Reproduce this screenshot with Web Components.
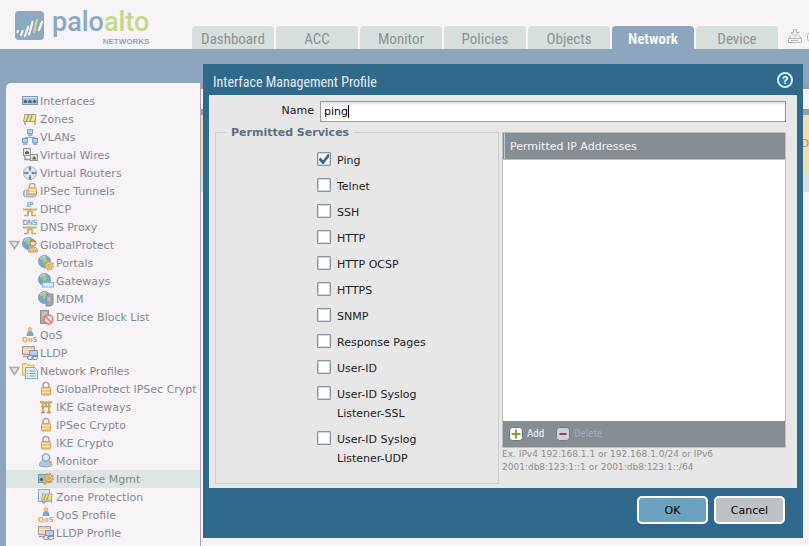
<!DOCTYPE html>
<html lang="en">
<head>
<meta charset="utf-8">
<title>Interface Management Profile</title>
<style>
html, body { height: 100%; }
body { margin: 0; overflow: hidden; background: #8ca6bd; font: 11px/18px "DejaVu Sans", sans-serif; --narrow: "Roboto Condensed", "DejaVu Sans Condensed", sans-serif; }
</style>
</head>
<body>
<app-shell>
  <app-header slot="header">
    <app-tab>Dashboard</app-tab>
    <app-tab>ACC</app-tab>
    <app-tab>Monitor</app-tab>
    <app-tab>Policies</app-tab>
    <app-tab>Objects</app-tab>
    <app-tab active>Network</app-tab>
    <app-tab>Device</app-tab>
  </app-header>
  <nav-tree slot="nav">
    <nav-item icon="ports">Interfaces</nav-item>
    <nav-item icon="zone">Zones</nav-item>
    <nav-item icon="vlan">VLANs</nav-item>
    <nav-item icon="wires">Virtual Wires</nav-item>
    <nav-item icon="router">Virtual Routers</nav-item>
    <nav-item icon="tunnel">IPSec Tunnels</nav-item>
    <nav-item icon="dhcp">DHCP</nav-item>
    <nav-item icon="dns">DNS Proxy</nav-item>
    <nav-item icon="globeuser" open>GlobalProtect</nav-item>
    <nav-item icon="portal" child>Portals</nav-item>
    <nav-item icon="gateway" child>Gateways</nav-item>
    <nav-item icon="mdm" child>MDM</nav-item>
    <nav-item icon="block" child>Device Block List</nav-item>
    <nav-item icon="qos">QoS</nav-item>
    <nav-item icon="lldp">LLDP</nav-item>
    <nav-item icon="profiles" open>Network Profiles</nav-item>
    <nav-item icon="lock" child>GlobalProtect IPSec Crypt</nav-item>
    <nav-item icon="torii" child>IKE Gateways</nav-item>
    <nav-item icon="lock" child>IPSec Crypto</nav-item>
    <nav-item icon="lock" child>IKE Crypto</nav-item>
    <nav-item icon="monitor" child>Monitor</nav-item>
    <nav-item icon="mgmt" child selected>Interface Mgmt</nav-item>
    <nav-item icon="zoneprot" child>Zone Protection</nav-item>
    <nav-item icon="qos" child>QoS Profile</nav-item>
    <nav-item icon="lldp" child>LLDP Profile</nav-item>
  </nav-tree>
  <profile-list slot="main"></profile-list>
  <modal-dialog slot="dialog" heading="Interface Management Profile">
    <profile-form>
      <service-check slot="services" checked>Ping</service-check>
      <service-check slot="services">Telnet</service-check>
      <service-check slot="services">SSH</service-check>
      <service-check slot="services">HTTP</service-check>
      <service-check slot="services">HTTP OCSP</service-check>
      <service-check slot="services">HTTPS</service-check>
      <service-check slot="services">SNMP</service-check>
      <service-check slot="services">Response Pages</service-check>
      <service-check slot="services">User-ID</service-check>
      <service-check slot="services">User-ID Syslog Listener-SSL</service-check>
      <service-check slot="services">User-ID Syslog Listener-UDP</service-check>
      <address-grid slot="addresses"></address-grid>
    </profile-form>
    <dialog-button slot="actions" primary>OK</dialog-button>
    <dialog-button slot="actions">Cancel</dialog-button>
  </modal-dialog>
</app-shell>

<script>
const globe = '<circle cx="6.5" cy="6.5" r="6" fill="#3f86c4" stroke="#5677a0"/><path d="M3 2.5L7 1l2 1-1 2 1.5 1L7 8 5 7.5 4.5 5 2 4.5zM7 9l3-1 1 1-2 3-2 .5z" fill="#7fc04b"/><path d="M2 4q2-3 5-3" stroke="#c8e4f6" fill="none" opacity=".7"/>';
const padlock = '<path d="M5 7V4.5a3 3 0 0 1 6 0V7" fill="none" stroke="#8f8a80" stroke-width="1.6"/><rect x="3.5" y="6.5" width="9" height="7.5" rx="1" fill="#f3b13d" stroke="#b57f2c"/><path d="M4 8.5h8M4 11.5h8" stroke="#fbe3a4" stroke-width="1.2"/>';
const barrier = '<path d="M3 3v11M13 3v11" stroke="#857f70" stroke-width="1.5"/><path d="M3 3.5h11l-1 7H1.5z" fill="#f9dc3c" stroke="#87836f"/><path d="M6.5 4L4.5 10M10 4L8 10" stroke="#75725f" stroke-width="1.3"/>';
const relay = '<path d="M1 8.5h14" stroke="#c69423" stroke-width="2"/><path d="M8 9v2M2 14.5h4v-4h4v4h4" fill="none" stroke="#c08a1e" stroke-width="1.7"/>';
const gear = '<circle r="4.4" fill="none" stroke="#c98b22" stroke-width="1.6" stroke-dasharray="1.8 1.6"/><circle r="3.5" fill="#f6bd3e" stroke="#c08722"/><circle r="1.2" fill="#fff0c0" stroke="#a87520"/>';
const pc = (x, y) => `<g transform="translate(${x} ${y})"><rect x=".5" y=".5" width="5" height="4" fill="#7cc8ff" stroke="#4b82bd"/><path d="M1 6h4.5" stroke="#5f6fb0" stroke-width="1.4"/></g>`;
const ICONS = {
  ports: '<rect x=".5" y="3.5" width="15" height="8" fill="#7fb4dc" stroke="#4d7596"/><path d="M2 9.5V8h1V7h1v1h1v1.5zM6.5 9.5V8h1V7h1v1h1v1.5zM11 9.5V8h1V7h1v1h1v1.5z" fill="#111a26" stroke="#111a26" stroke-width=".5"/><path d="M1 4.5h14" stroke="#cfe4f4"/>',
  zone: barrier,
  vlan: '<path d="M8 6v3M3 11V8.5h10V11" fill="none" stroke="#6c87ab"/>' + pc(5, 0) + pc(0, 9) + pc(10, 9),
  wires: '<rect x="1.5" y="1.5" width="7" height="7" fill="#d9d9d2" stroke="#6b6b68"/><rect x="8.5" y="7.5" width="7" height="6" fill="#d9d9d2" stroke="#6b6b68"/><path d="M3 7V5h1V4h2v1h1v2zM10.5 12.5V10.5h1v-1h1.5v1h1v2z" fill="#222"/><path d="M3 9v3.5h5" fill="none" stroke="#6b6b68" stroke-width="1.5"/>',
  router: '<circle cx="8" cy="8" r="6.5" fill="#d5e3ee" stroke="#7e93a8"/><path d="M8 2v4M8 10v4M2 8h4M10 8h4" stroke="#33465c" stroke-width="1.3"/><path d="M6.5 4h3L8 1.5zM6.5 12h3L8 14.5zM4.5 6.5v3L7 8zM11.5 6.5v3L9 8z" fill="#33465c"/>',
  tunnel: '<rect x="1.5" y="7" width="13" height="7" rx="3" fill="#a9c3e4" stroke="#6d8db8"/><ellipse cx="3.5" cy="10.5" rx="1.5" ry="3" fill="#e7effa" stroke="#6d8db8"/><g transform="translate(3 -1) scale(.9)">' + padlock + '</g>',
  dhcp: '<text x="8" y="5.5" text-anchor="middle" font-family="DejaVu Sans" font-size="7" fill="#2f6fa5" stroke="#2f6fa5" stroke-width=".2">IP</text>' + relay,
  dns: '<text x="8" y="5.5" text-anchor="middle" font-family="DejaVu Sans" font-size="7" fill="#2f6fa5" stroke="#2f6fa5" stroke-width=".2">DNS</text>' + relay,
  globeuser: globe + '<circle cx="11" cy="6" r="3" fill="#f6cfa5" stroke="#94602f"/><path d="M8 5.5q.5-3 3-3t3 3q-3-1.5-6 0z" fill="#955c2d"/><path d="M6.5 15q0-5 4.5-5t4.5 5z" fill="#f8a350" stroke="#c46f23"/>',
  portal: globe + '<g transform="translate(11 10.5)">' + gear + '</g>',
  gateway: globe + '<rect x="4.5" y="9.5" width="11" height="4.5" fill="#c5e4f8" stroke="#4c9fd8"/><path d="M6 12h7" stroke="#fff"/>',
  mdm: globe + '<path d="M8 5l2-2h5v10l-2 2H8z" fill="#7f858d" stroke="#5c6066"/><path d="M9.5 7h3M9.5 9h3" stroke="#c7ccd2"/>',
  block: '<rect x="2.5" y="1.5" width="8" height="13" fill="#8d9198" stroke="#64686f"/><path d="M4 4h5M4 6h5" stroke="#c7ccd2"/><circle cx="10.5" cy="10.5" r="4.3" fill="#fbe4e2" stroke="#e0483f" stroke-width="1.7"/><path d="M7.5 7.5l6 6" stroke="#e0483f" stroke-width="1.7"/>',
  qos: '<circle cx="8" cy="2.5" r="2" fill="#f6b23c" stroke="#b97a20" stroke-width=".5"/><path d="M4.5 9q0-5 3.5-5t3.5 5z" fill="#3f8bd0"/><text x="8" y="15" text-anchor="middle" font-family="DejaVu Sans" font-weight="bold" font-size="7" fill="#e48434">QoS</text>',
  lldp: '<rect x=".5" y="1.5" width="12" height="8" fill="#edb97a" stroke="#8b7f76"/><path d="M1 4.5h11M1 7h11" stroke="#fbe7c9"/><path d="M7.5 5.5h8v6h-8z" fill="#8dc0f0" stroke="#4e6f95"/><path d="M1 11.5h6" stroke="#778" stroke-width="1.5"/><rect x="5.5" y="10.5" width="5.5" height="4" rx="2" fill="#ddd" stroke="#555"/><rect x="10" y="10.5" width="5.5" height="4" rx="2" fill="none" stroke="#555"/>',
  profiles: '<path d="M.5 12.5v-12h4l1.5 1.5h6v10.5z" fill="#f5dd8c" stroke="#b3a04c"/><path d="M3.5 15.5v-11h9l3 3v8z" fill="#dceefb" stroke="#4595c5"/><path d="M7.5 8h6M7.5 10.5h6M7.5 13h6M5 8h1M5 10.5h1M5 13h1" stroke="#3f7cab"/>',
  lock: padlock,
  torii: '<path d="M2 3q6 1.5 12 0" fill="none" stroke="#c48a1c" stroke-width="2.4"/><path d="M3 7.5h10M5 4v10M11 4v10M8 4v3" stroke="#c48a1c" stroke-width="1.9"/><path d="M3 13.5h4M9 13.5h4" stroke="#8f6418" stroke-width="1.5"/>',
  monitor: '<path d="M1.5 13q0-6 5-6l7 2v4q-6 2-12 0z" fill="#93b4e0" stroke="#6a8bbb"/><circle cx="8" cy="4.5" r="3.7" fill="#cfe6f6" stroke="#5e7fa6" stroke-width="1.3"/><path d="M10.5 8l4 4.5" stroke="#e0953f" stroke-width="2"/>',
  mgmt: '<rect x=".5" y="3.5" width="12" height="8" fill="#7fb4dc" stroke="#4d7596"/><path d="M2 9.5V8h1V7h1v1h1v1.5z" fill="#111a26" stroke="#111a26" stroke-width=".5"/><path d="M6 13.5l5-5" stroke="#d09426" stroke-width="2.5"/><g transform="translate(11 7)">' + gear + '</g>',
  zoneprot: '<rect x=".5" y=".5" width="11" height="12" fill="#c9e2f8" stroke="#5f93c6"/><g transform="translate(2 2) scale(.87)">' + barrier + '</g><path d="M3 12h6l-3 3z" fill="#5f93c6"/>'
};

const define = (name, css, html, setup) => {
  const template = document.createElement('template');
  template.innerHTML = `<style>*{box-sizing:border-box}${css}</style>${html}`;
  customElements.define(name, class extends HTMLElement {
    connectedCallback() {
      if (this.shadowRoot) return;
      const root = this.attachShadow({ mode: 'open' });
      root.append(template.content.cloneNode(true));
      if (setup) setup(this, root);
    }
  });
};

define('app-shell', `
  :host { display: flex; flex-direction: column; height: 100%; position: relative; overflow: hidden; }
  .work { flex: 1; min-height: 0; display: grid; grid-template-columns: 195px minmax(0, 1fr); padding: 34px 0 0 6px; }
  ::slotted([slot=dialog]) { position: absolute; top: 64px; left: 203px; right: 6px; }
`, `<slot name="header"></slot><div class="work"><slot name="nav"></slot><slot name="main"></slot></div><slot name="dialog"></slot>`);

define('app-header', `
  :host { display: flex; align-items: flex-end; height: 49px; background: #f7f3f7; }
  .brand { display: flex; align-items: flex-start; gap: 8px; width: 192px; flex: none; height: 100%; padding: 7px 0 0 15px; }
  .brand svg { width: 29px; height: 29px; margin-top: 4px; }
  .word { display: flex; flex-direction: column; align-items: flex-end; font: 500 27px/31px Roboto, sans-serif; color: #8ba9c1; }
  .word span span { color: #c5d889; }
  small { font: bold 8px/7px "Liberation Sans", sans-serif; }
  nav { display: flex; gap: 2px; }
  .tools { display: flex; gap: 4px; padding: 0 0 5px 9px; }
  button { border: 0; background: none; padding: 0; width: 16px; height: 17px; }
  svg { display: block; }
`, `<div class="brand">
    <svg viewBox="0 0 29 29"><rect width="29" height="29" rx="4" fill="#8ba9c1"/><g stroke="#f7f3f7" stroke-width="2.3" stroke-linecap="round"><path d="M2.5 21l.5-1M6 24l1.5-4M10 25l3-9M14 23.5L17.5 11M24 19l3-8"/><path d="M19 21L22 9" stroke="#c5d889"/></g></svg>
    <div class="word"><span>palo<span>alto</span></span><small>NETWORKS</small></div>
  </div>
  <nav aria-label="Main"><slot></slot></nav>
  <div class="tools">
    <button aria-label="Commit"><svg width="16" height="17" viewBox="0 0 16 17" fill="none" stroke="#b5b5bb"><path d="M6.5 2.5h3v3h2.5l-4 4-4-4h2.5z"/><path d="M4 8.5l-2.5 3v4h13v-4l-2.5-3M1.5 11.5h13M4 13.5h7"/></svg></button>
    <button aria-label="Locks"><svg width="16" height="17" viewBox="0 0 16 17" fill="none" stroke="#b5b5bb"><rect x=".5" y="5.5" width="11" height="9" rx="3"/></svg></button>
  </div>`);

define('app-tab', `
  :host { display: block; width: 82px; }
  a { display: block; height: 23px; font: 15px/26px var(--narrow); text-align: center; text-decoration: none; color: #8b9296; background: #d6dfde; border-radius: 4px 4px 0 0; }
  :host([active]) a { background: #8ca6bd; color: #f7f7fa; font-weight: bold; }
`, `<a href="#"><slot></slot></a>`);

define('nav-tree', `
  :host { display: block; background: #f7f3f7; border-radius: 5px 0 0 0; border-right: 1px solid #a4a8b4; padding-top: 9px; overflow: hidden; min-width: 0; }
`, `<nav aria-label="Network"><slot></slot></nav>`);

define('nav-item', `
  :host { display: block; }
  a { display: flex; align-items: center; gap: 2px; height: 18px; padding-left: 2px; color: #838b93; text-decoration: none; white-space: nowrap; }
  span { padding-top: 2px; }
  :host([child]) a { padding-left: 18px; }
  :host([selected]) a { background: #dee5e4; }
  .toggle { flex: none; width: 12px; height: 10px; }
  .toggle path { display: none; }
  :host([open]) .toggle path { display: inline; }
  .icon { flex: none; width: 16px; height: 16px; opacity: .7; }
`, `<a href="#"><svg class="toggle" viewBox="0 0 12 10"><path d="M2 1.5h9l-4.5 7z" fill="#e8e6e8" stroke="#aaa" stroke-width="1.5"/></svg><svg class="icon" viewBox="0 0 16 16" aria-hidden="true"></svg><span><slot></slot></span></a>`,
(host, root) => { root.querySelector('.icon').innerHTML = ICONS[host.getAttribute('icon')]; });

define('profile-list', `
  :host { display: flex; flex-direction: column; background: #f7f3f7; min-width: 0; }
  .bar { height: 6px; background: #979cac; }
  .search { height: 20px; }
  .head { height: 58px; background: #f2dbac; color: #a0988a; text-align: right; line-height: 58px; }
  .row { height: 19px; background: #d8dfe0; }
`, `<div class="bar"></div><div class="search"></div><div class="bar"></div><div class="head">D</div><div class="row"></div>`);

define('modal-dialog', `
  :host { display: block; background: #31698c; padding: 0 6px; color: #222; }
  header { display: flex; align-items: center; justify-content: space-between; height: 31px; padding: 1px 4px 0; }
  h1 { margin: 0; padding-top: 4px; font: 14px/20px var(--narrow); color: #e3edf3; }
  header button { width: 16px; height: 16px; padding: 0; border: 2px solid #dcecf5; border-radius: 50%; background: radial-gradient(#3c8fc4, #11558c); color: #fff; font: bold 11px/12px "Liberation Sans", sans-serif; }
  .body { background: #e7e7e7; padding: 6px 11px 4px 6px; }
  footer { display: flex; justify-content: flex-end; gap: 6px; padding: 8px 12px 14px; }
`, `<section role="dialog" aria-label="Interface Management Profile"><header><h1></h1><button aria-label="Help">?</button></header><div class="body"><slot></slot></div><footer><slot name="actions"></slot></footer></section>`,
(host, root) => { root.querySelector('h1').textContent = host.getAttribute('heading'); });

define('profile-form', `
  :host { display: block; }
  .name { display: grid; grid-template-columns: 99px minmax(0, 1fr); gap: 6px; margin-bottom: 4px; }
  .name label { text-align: right; line-height: 20px; }
  .field { position: relative; display: flex; }
  input { flex: 1; min-width: 0; height: 21px; padding: 0 3px; border: 1px solid #979b9d; border-radius: 0; background: #fff; box-shadow: inset 0 2px 2px #e2e2e2; font: 11px "DejaVu Sans", sans-serif; color: #000; outline: 0; }
  .caret { position: absolute; left: 28px; top: 4px; width: 1px; height: 13px; background: #000; }
  .cols { display: grid; grid-template-columns: minmax(0, 1fr) minmax(0, 1fr); gap: 3px; }
  fieldset { margin: 0; min-width: 0; border: 1px solid #c9cdce; padding: 11px 8px 15px 101px; }
  legend { margin-left: -91px; padding: 0 5px; font-weight: bold; line-height: 13px; color: #5a7083; }
  .services { display: grid; gap: 6px; }
`, `<div class="name"><label for="name">Name</label><div class="field"><input id="name" type="text" value="ping"><span class="caret"></span></div></div>
  <div class="cols"><fieldset><legend>Permitted Services</legend><div class="services"><slot name="services"></slot></div></fieldset><slot name="addresses"></slot></div>`);

define('service-check', `
  :host { display: block; }
  label { display: flex; gap: 6px; line-height: 19px; max-width: 124px; }
  span { padding-top: 1px; }
  input { appearance: none; flex: none; width: 14px; height: 14px; margin: 2px 0 0; border: 1px solid #8396a5; border-radius: 1px; background: #fff; box-shadow: inset 0 0 0 1px #d5dade; }
  input:checked { background: #fff url("data:image/svg+xml,%3Csvg xmlns='http://www.w3.org/2000/svg' viewBox='0 0 12 12'%3E%3Cpath d='M1.5 5.5l3.5 4L11.5 1' fill='none' stroke='%23316a90' stroke-width='2.8'/%3E%3C/svg%3E"); }
`, `<label><input type="checkbox"><span><slot></slot></span></label>`,
(host, root) => { root.querySelector('input').checked = host.hasAttribute('checked'); });

define('address-grid', `
  :host { display: flex; flex-direction: column; padding: 6px 0 10px; min-width: 0; }
  .frame { flex: 1; display: flex; flex-direction: column; border: 1px solid #b9c0c2; background: #fff; }
  table { width: 100%; border-spacing: 0; }
  th { height: 27px; padding: 1px 7px 0; text-align: left; font-weight: normal; color: #f3f5f6; background: #868e94; box-shadow: inset 1px 0 #868e94, inset 2px 0 #c2c7ca; border-bottom: 1px solid #b9c0c2; }
  .fill { flex: 1; }
  .bar { display: flex; gap: 12px; height: 26px; padding: 0 6px; background: #868e94; }
  button { display: flex; align-items: center; gap: 4px; padding: 0; border: 0; background: none; color: #f2f4f5; font: 11px/14px var(--narrow); }
  button:disabled { color: #a5adb4; }
  svg { display: block; width: 14px; height: 14px; }
  p { margin: 0; font-size: 9px; line-height: 13px; color: #8e8e8e; max-width: 240px; }
`, `<div class="frame"><table><thead><tr><th scope="col">Permitted IP Addresses</th></tr></thead></table><div class="fill"></div>
  <div class="bar"><button><svg viewBox="0 0 14 14"><rect x=".5" y=".5" width="13" height="13" rx="3" fill="#fff" stroke="#637885"/><path d="M7 2.5v9M2.5 7h9" stroke="#86a12b" stroke-width="2"/></svg>Add</button>
  <button disabled><svg viewBox="0 0 14 14"><rect x=".5" y=".5" width="13" height="13" rx="3" fill="#cfd0d7" stroke="#6f7d89"/><path d="M3.5 7h7" stroke="#8a4a42" stroke-width="2"/></svg>Delete</button></div></div>
  <p>Ex. IPv4 192.168.1.1 or 192.168.1.0/24 or IPv6 2001:db8:123:1::1 or 2001:db8:123:1::/64</p>`);

define('dialog-button', `
  :host { display: block; }
  button { display: block; min-width: 71px; height: 28px; padding: 0 8px; border: 2px solid #fff; border-radius: 5px; background: #bcc2c5; color: #000; font: 11px "DejaVu Sans", sans-serif; }
  :host([primary]) button { background: #6ba2bf; }
`, `<button><slot></slot></button>`);
</script>
</body>
</html>
